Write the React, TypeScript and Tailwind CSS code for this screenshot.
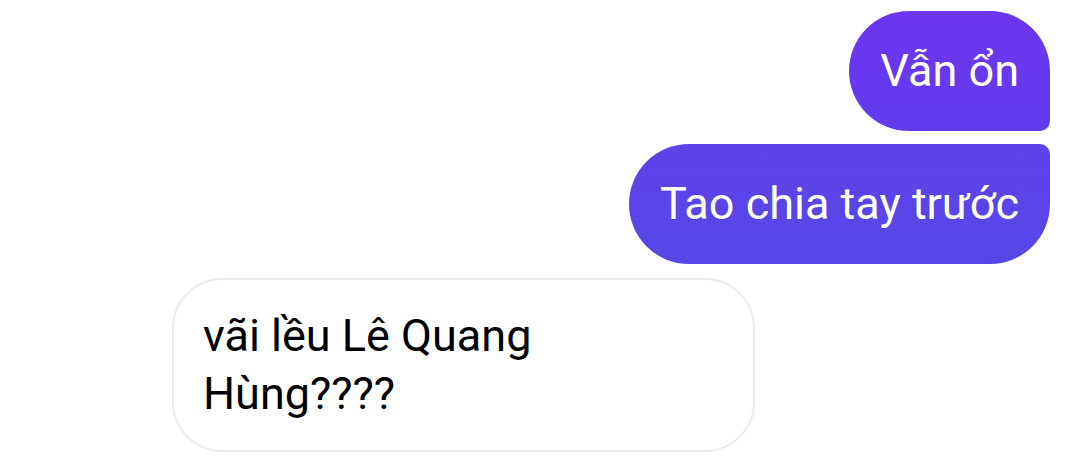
export default function App() {
  return (
    <div className="w-[1080px] h-[456px] bg-white overflow-hidden font-['Roboto',sans-serif]">
      <div className="flex flex-col items-end pt-[11px] pr-[30px]">
        <div className="rounded-[60px] rounded-br-[10px] bg-gradient-to-b from-[#6c35f0] to-[#623bed] px-[31px] py-[32px] text-[45px] leading-[56px] text-white">
          Vẫn ổn
        </div>
        <div className="mt-[13px] rounded-[60px] rounded-tr-[10px] bg-gradient-to-b from-[#5e41ea] to-[#5747e6] px-[31px] py-[32px] text-[45px] leading-[56px] text-white">
          Tao chia tay trước
        </div>
      </div>
      <div className="pl-[172px] pt-[14px]">
        <div className="w-[583px] rounded-[50px] border-2 border-[#ebebeb] bg-white px-[29px] py-[27px] text-[45px] leading-[58px] text-black">
          vãi lều Lê Quang
          <br />
          Hùng????
        </div>
      </div>
    </div>
  );
}
